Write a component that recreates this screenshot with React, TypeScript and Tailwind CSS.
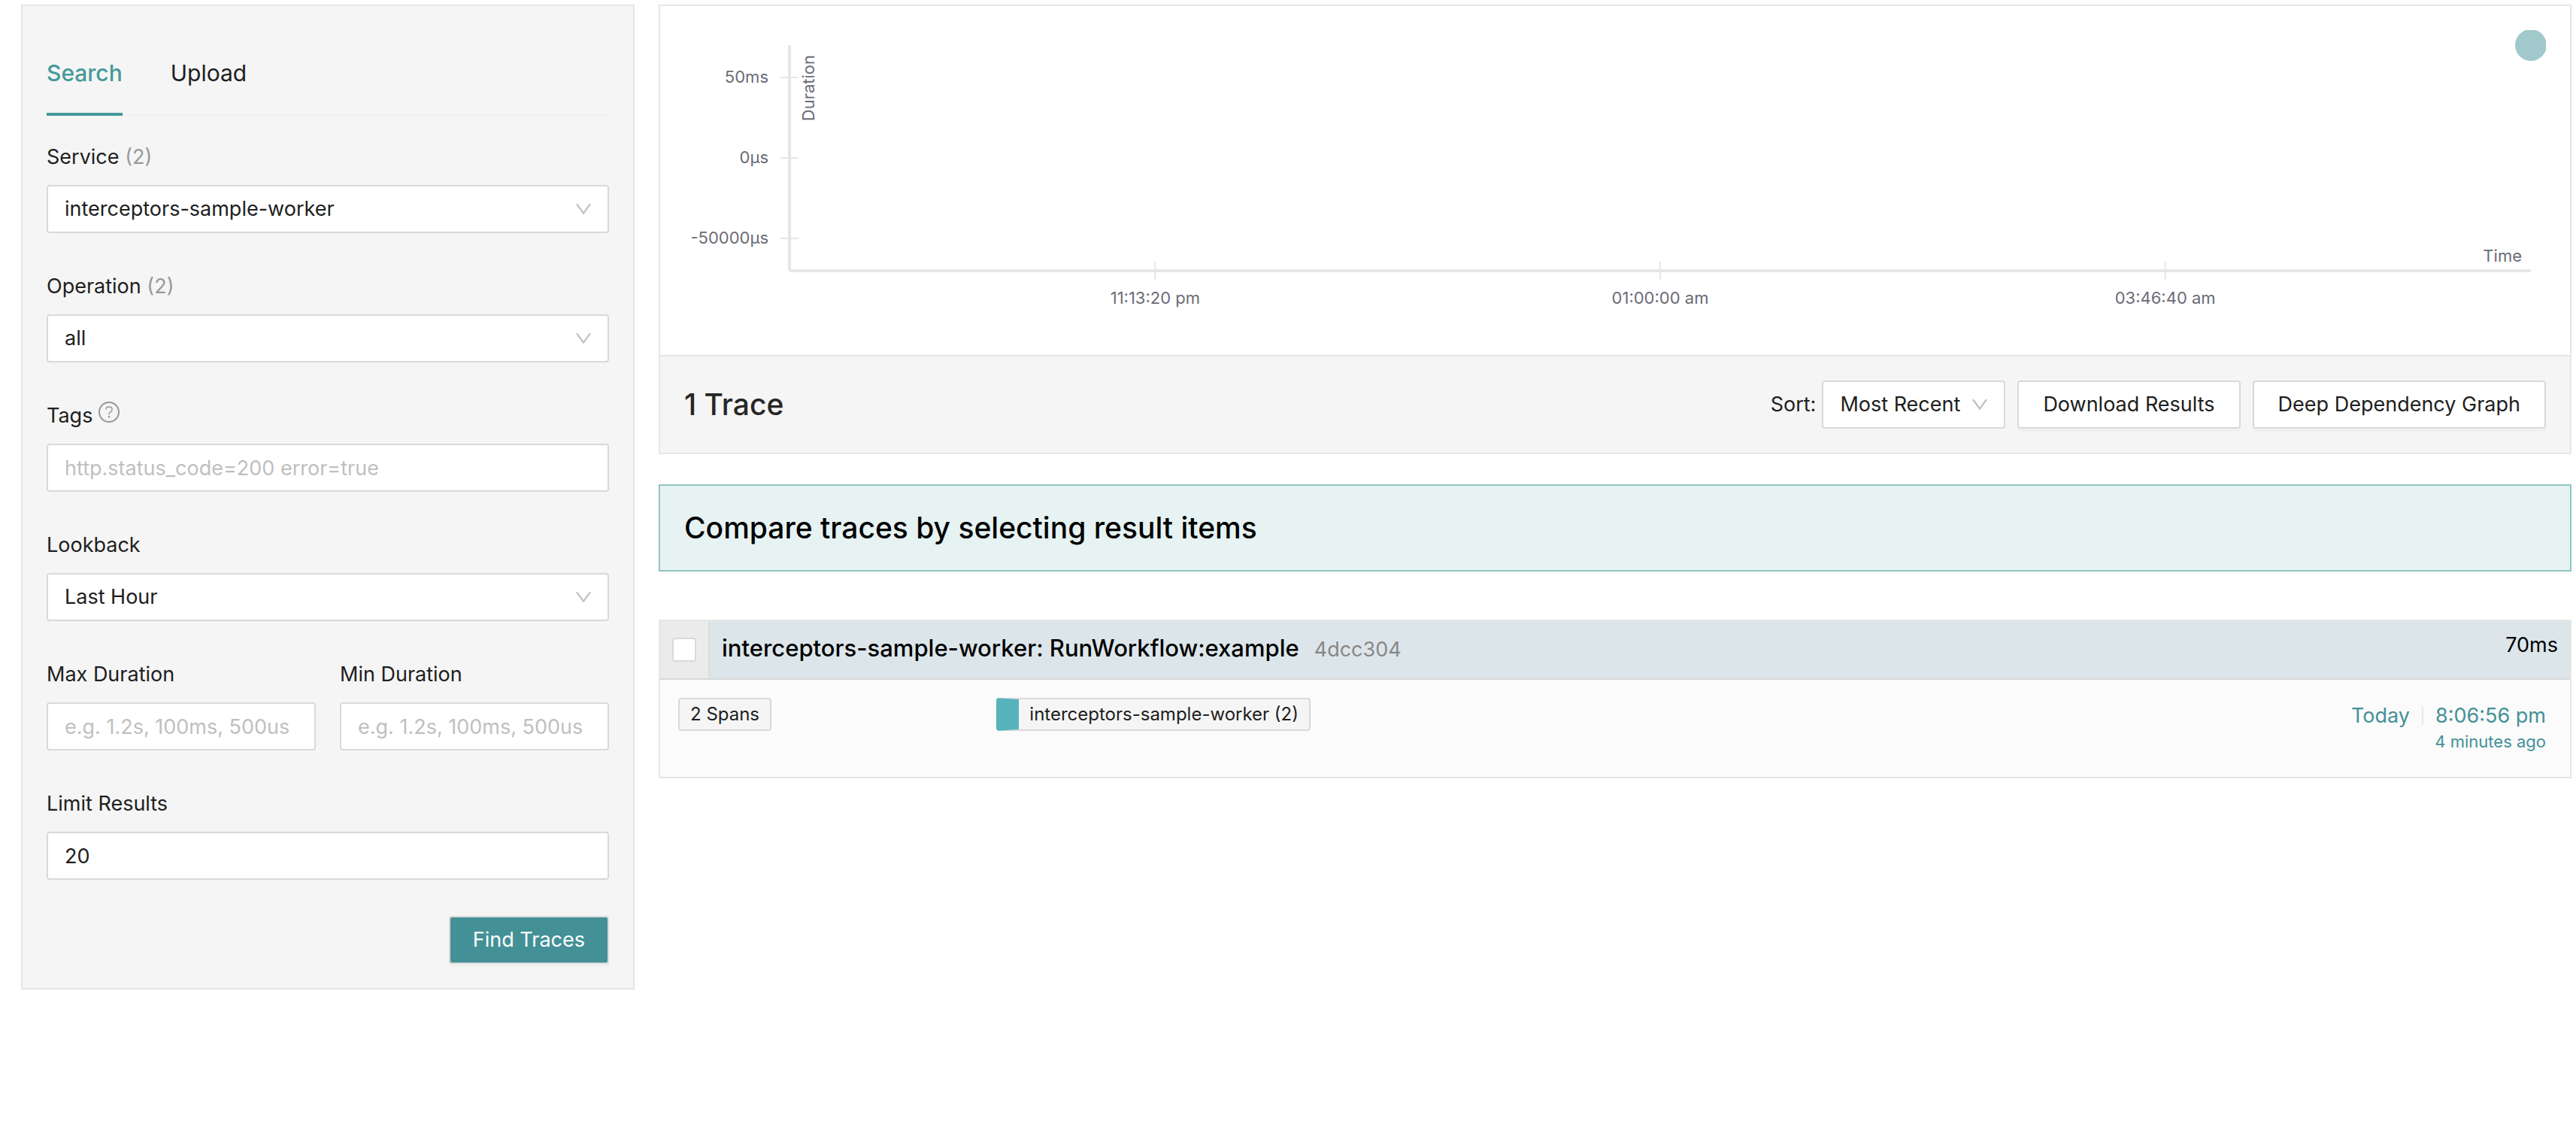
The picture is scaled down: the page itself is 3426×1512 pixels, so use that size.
import { useId, type ReactNode } from "react";

function ChevronDown() {
  return (
    <svg
      viewBox="64 64 896 896"
      className="pointer-events-none absolute top-1/2 right-5.5 size-6 -translate-y-1/2 fill-[#bfbfbf]"
      aria-hidden="true"
    >
      <path d="M884 256h-75c-5.1 0-9.9 2.5-12.9 6.6L512 654.2 227.9 262.6c-3-4.1-7.8-6.6-12.9-6.6h-75c-6.5 0-10.3 7.4-6.5 12.7l352.6 486.1c12.8 17.6 39 17.6 51.7 0l352.6-486.1c3.9-5.3.1-12.7-6.4-12.7z" />
    </svg>
  );
}

function HelpIcon() {
  return (
    <svg viewBox="0 0 28 28" className="size-7" fill="none" stroke="#999999" aria-hidden="true">
      <circle cx="14" cy="14" r="13" strokeWidth="2" />
      <path
        d="M10 10.6C10 8.4 11.7 7 14 7s4.1 1.4 4.1 3.5c0 1.7-.9 2.5-2.200 3.400-1.300.9-1.900 1.600-1.900 3v.7"
        strokeWidth="1.5"
      />
      <circle cx="14" cy="20.2" r="1.3" fill="#999999" stroke="none" />
    </svg>
  );
}

const controlClass =
  "h-16 w-full rounded border-2 border-[#d9d9d9] bg-white px-5.5 text-[27px] text-[#202020] outline-none placeholder:text-[#bfbfbf] placeholder:opacity-100";

function Field({
  label,
  count,
  help,
  children,
}: {
  label: string;
  count?: number;
  help?: boolean;
  children: (id: string) => ReactNode;
}) {
  const id = useId();
  return (
    <div className="mb-12 flex min-w-0 flex-col gap-3.5">
      <div className="flex items-start gap-2 leading-[46px]">
        <label htmlFor={id}>
          {label}
          {count !== undefined && <span className="text-[#999999]"> ({count})</span>}
        </label>
        {help && (
          <button type="button" aria-label="Tags help" className="mt-1">
            <HelpIcon />
          </button>
        )}
      </div>
      {children(id)}
    </div>
  );
}

function SelectBox({ id, options }: { id: string; options: string[] }) {
  return (
    <div className="relative">
      <select id={id} className={`${controlClass} appearance-none`}>
        {options.map((o) => (
          <option key={o}>{o}</option>
        ))}
      </select>
      <ChevronDown />
    </div>
  );
}

function SearchPanel() {
  return (
    <aside className="border-2 border-[#e6e6e6] bg-[#f5f5f5] p-8">
      <div role="tablist" className="flex gap-16 text-[30px] shadow-[inset_0_-2px_0_#f0f0f0]">
        <button
          type="button"
          role="tab"
          aria-selected="true"
          className="h-[114px] border-b-4 border-[#459999] pt-1 font-medium text-[#459999]"
        >
          Search
        </button>
        <button
          type="button"
          role="tab"
          aria-selected="false"
          className="h-[114px] border-b-4 border-transparent pt-1"
        >
          Upload
        </button>
      </div>
      <form className="pt-8" onSubmit={(e) => e.preventDefault()}>
        <Field label="Service" count={2}>
          {(id) => <SelectBox id={id} options={["interceptors-sample-worker"]} />}
        </Field>
        <Field label="Operation" count={2}>
          {(id) => <SelectBox id={id} options={["all"]} />}
        </Field>
        <Field label="Tags" help>
          {(id) => (
            <input id={id} type="text" className={controlClass} placeholder="http.status_code=200 error=true" />
          )}
        </Field>
        <Field label="Lookback">{(id) => <SelectBox id={id} options={["Last Hour"]} />}</Field>
        <div className="grid grid-cols-2 gap-8">
          <Field label="Max Duration">
            {(id) => <input id={id} type="text" className={controlClass} placeholder="e.g. 1.2s, 100ms, 500us" />}
          </Field>
          <Field label="Min Duration">
            {(id) => <input id={id} type="text" className={controlClass} placeholder="e.g. 1.2s, 100ms, 500us" />}
          </Field>
        </div>
        <Field label="Limit Results">
          {(id) => <input id={id} type="text" className={controlClass} defaultValue="20" />}
        </Field>
        <div className="flex justify-end">
          <button
            type="submit"
            className="h-16 rounded border-2 border-[#d9d9d9] bg-[#439197] px-[30px] text-white shadow-[0_4px_0_#f0f0f0]"
          >
            Find Traces
          </button>
        </div>
      </form>
    </aside>
  );
}

const durationTicks = [
  { y: 63, label: "50ms" },
  { y: 170, label: "0µs" },
  { y: 277, label: "-50000µs" },
];

const timeTicks = [
  { x: "21%", label: "11:13:20 pm" },
  { x: "50%", label: "01:00:00 am" },
  { x: "79%", label: "03:46:40 am" },
];

function ScatterPlot() {
  return (
    <svg
      className="block h-[400px] w-full overflow-hidden"
      fontSize="22"
      fill="#6b6b76"
      role="img"
      aria-label="Trace durations over time"
    >
      <g stroke="#e6e6e9" strokeWidth="2">
        {durationTicks.map((t) => (
          <line key={t.label} x1="128" x2="152" y1={t.y} y2={t.y} />
        ))}
        <line x1="140" x2="140" y1="20" y2="320" strokeWidth="4" />
      </g>
      {durationTicks.map((t) => (
        <text key={t.label} x="112" y={t.y + 7} textAnchor="end">
          {t.label}
        </text>
      ))}
      <text transform="translate(173 33) rotate(-90)" textAnchor="end">
        Duration
      </text>
      <svg x="140" className="w-[calc(100%-160px)] overflow-visible">
        <line x1="0" x2="100%" y1="320" y2="320" stroke="#e6e6e9" strokeWidth="4" />
        {timeTicks.map((t) => (
          <g key={t.label}>
            <line x1={t.x} x2={t.x} y1="308" y2="332" stroke="#e6e6e9" strokeWidth="2" />
            <text x={t.x} y="364" textAnchor="middle">
              {t.label}
            </text>
          </g>
        ))}
        <text x="100%" y="308" dx="-12" textAnchor="end">
          Time
        </text>
        <circle cx="100%" cy="20" r="21" fill="#a1c8cb" />
      </svg>
    </svg>
  );
}

function ResultsHeader() {
  const buttonClass =
    "h-16 rounded border-2 border-[#d9d9d9] bg-white px-8 text-[#202020] shadow-[0_4px_0_#f0f0f0]";
  return (
    <section className="border-2 border-[#e6e6e6]">
      <div className="p-8">
        <ScatterPlot />
      </div>
      <div className="flex items-center gap-4 border-t-2 border-[#e6e6e6] bg-[#f5f5f5] p-8">
        <h2 className="mr-auto text-[39px] leading-12 font-medium text-[#262626]">1 Trace</h2>
        <div className="flex items-center gap-2">
          <label htmlFor="sort">Sort:</label>
          <div className="relative w-61">
            <select id="sort" className={`${controlClass} appearance-none`}>
              <option>Most Recent</option>
            </select>
            <ChevronDown />
          </div>
        </div>
        <button type="button" className={buttonClass}>
          Download Results
        </button>
        <button type="button" className={buttonClass}>
          Deep Dependency Graph
        </button>
      </div>
    </section>
  );
}

function TraceResult() {
  return (
    <article className="border-2 border-[#e6e6e6]">
      <div className="flex border-b-2 border-[#d8d8d8]">
        <div className="flex w-[66px] items-center justify-center border-r-2 border-[#dddddd] bg-[#ebebeb]">
          <input
            type="checkbox"
            aria-label="Select trace 4dcc304"
            className="size-8 appearance-none rounded border-2 border-[#d9d9d9] bg-white"
          />
        </div>
        <a href="#trace" className="flex flex-1 items-start justify-between bg-[#dce6ea] px-4 pt-3 pb-4 text-black">
          <h3 className="flex items-baseline gap-5 text-[31px] leading-12 font-medium">
            interceptors-sample-worker: RunWorkflow:example
            <small className="text-[27px] leading-10 font-normal text-[#888888]">4dcc304</small>
          </h3>
          <span className="leading-10">70ms</span>
        </a>
      </div>
      <div className="grid grid-cols-6 bg-[#fbfbfb] pt-6 pb-[37px]">
        <div className="pl-6">
          <span className="inline-block rounded border-2 border-[#d9d9d9] bg-[#f5f5f5] px-3.5 text-2xl leading-10">
            2 Spans
          </span>
        </div>
        <ul className="col-span-4 pl-6">
          <li className="inline-block rounded border-2 border-l-[30px] border-[#d9d9d9] border-l-[#57b3bb] bg-[#f5f5f5] px-3.5 text-2xl leading-10">
            interceptors-sample-worker (2)
          </li>
        </ul>
        <div className="flex flex-col items-end pr-8 text-[#439197]">
          <div className="flex items-center leading-12">
            <span>Today</span>
            <span className="mx-4 h-6 w-0.5 bg-[#e8e8e8]" />
            <span>8:06:56 pm</span>
          </div>
          <small className="text-[22px] leading-5">4 minutes ago</small>
        </div>
      </div>
    </article>
  );
}

export default function App() {
  return (
    <div className="grid grid-cols-[17fr_53fr] items-start gap-8 bg-white pt-1.5 pr-1.5 pl-7 font-['Inter',sans-serif] text-[27px] text-[#202020]">
      <SearchPanel />
      <main className="min-w-0">
        <ResultsHeader />
        <div className="mt-10 mb-16 border-2 border-[#91c3c4] bg-[#e6f3f2] p-8">
          <h2 className="text-[39px] leading-12 font-medium text-black">Compare traces by selecting result items</h2>
        </div>
        <TraceResult />
      </main>
    </div>
  );
}
